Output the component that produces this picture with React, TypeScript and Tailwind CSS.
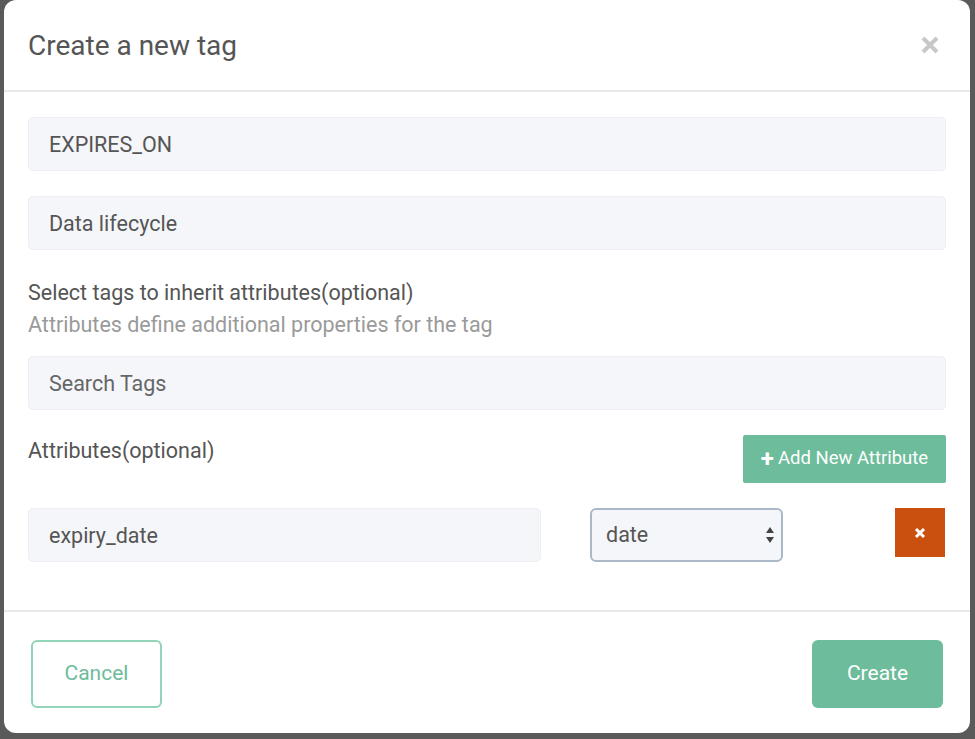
import { useState } from 'react';

const font = { fontFamily: 'Roboto, "Open Sans", sans-serif' };

function Field({ value, placeholder }: { value?: string; placeholder?: string }) {
  return (
    <input
      defaultValue={value}
      placeholder={placeholder}
      className="h-[54px] w-full rounded-[5px] border border-[#eceef3] bg-[#f5f6fa] px-[20px] text-[21.5px] text-[#555] outline-none placeholder:text-[#666]"
    />
  );
}

export default function App() {
  const [type, setType] = useState('date');

  return (
    <div className="h-[739px] w-[975px] bg-[#5a5a5a] pl-[4px] pr-[5px]" style={font}>
      <div className="flex h-[733px] flex-col rounded-[12px] bg-white">
        {/* header */}
        <div className="flex h-[92px] items-center justify-between border-b-2 border-[#e9e9e9] pl-[24px] pr-[30px]">
          <h1 className="pt-[2px] text-[28px] text-[#555]">Create a new tag</h1>
          <button className="text-[#c8c8c8]">
            <svg width="20" height="20" viewBox="0 0 20 20">
              <path d="M3 3 L17 17 M17 3 L3 17" stroke="currentColor" strokeWidth="4" strokeLinecap="butt" />
            </svg>
          </button>
        </div>

        {/* body */}
        <div className="flex flex-col px-[24px] pb-[48px] pt-[25px]">
          <Field value="EXPIRES_ON" />
          <div className="mt-[25px]">
            <Field value="Data lifecycle" />
          </div>

          <div className="mt-[27px] text-[21.5px] leading-[32px] text-[#555]">Select tags to inherit attributes(optional)</div>
          <div className="text-[21.5px] leading-[32px] text-[#9a9a9a]">Attributes define additional properties for the tag</div>

          <div className="mt-[15px]">
            <Field placeholder="Search Tags" />
          </div>

          <div className="mt-[25px] flex items-start justify-between">
            <span className="mt-[3px] text-[21.5px] leading-[26px] text-[#555]">Attributes(optional)</span>
            <button className="flex h-[48px] w-[203px] items-center justify-center gap-[4px] rounded-[2px] bg-[#6dbc9b] text-[18.5px] text-white">
              <span className="text-[24px] font-bold leading-none">+</span>
              Add New Attribute
            </button>
          </div>

          <div className="mt-[25px] flex items-start">
            <div className="w-[513px]">
              <Field value="expiry_date" />
            </div>
            <div className="relative ml-[49px] w-[193px]">
              <select
                value={type}
                onChange={(e) => setType(e.target.value)}
                className="h-[54px] w-full appearance-none rounded-[6px] border-2 border-[#aab8c8] bg-[#f5f6fa] px-[14px] text-[21.5px] text-[#555] outline-none"
              >
                <option value="string">string</option>
                <option value="date">date</option>
                <option value="int">int</option>
              </select>
              <svg className="pointer-events-none absolute right-[8px] top-[18px]" width="10" height="18" viewBox="0 0 10 18">
                <path d="M5 1 L9 7 H1 Z M5 17 L9 11 H1 Z" fill="#444" />
              </svg>
            </div>
            <button className="ml-auto mr-[1px] flex h-[49px] w-[50px] items-center justify-center bg-[#c9500f] text-white">
              <svg width="12" height="12" viewBox="0 0 12 12">
                <path d="M2 2 L10 10 M10 2 L2 10" stroke="white" strokeWidth="3" />
              </svg>
            </button>
          </div>
        </div>

        {/* footer */}
        <div className="flex items-center justify-between border-t-2 border-[#e9e9e9] pl-[27px] pr-[27px] pt-[28px]">
          <button className="h-[68px] w-[131px] rounded-[6px] border-2 border-[#92d4b8] text-[21px] text-[#6dbc9b]">Cancel</button>
          <button className="h-[68px] w-[131px] rounded-[6px] bg-[#6dbc9b] text-[21px] text-white">Create</button>
        </div>
      </div>
    </div>
  );
}
